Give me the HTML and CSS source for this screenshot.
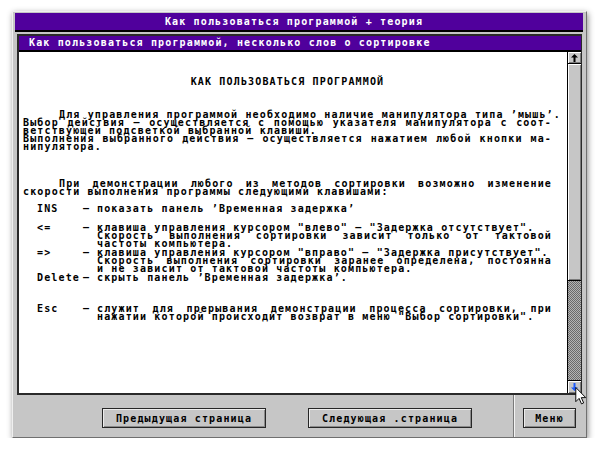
FILE: index.html
```html
<!DOCTYPE html>
<html lang="ru">
<head>
<meta charset="utf-8">
<title>Как пользоваться программой</title>
<link rel="stylesheet" href="styles.css">
</head>
<body>
<div class="screen">
  <div class="window">
    <div class="titlebar">Как пользоваться программой + теория</div>
    <div class="panel">
      <div class="subtitle">Как пользоваться программой, несколько слов о сортировке</div>
      <div class="body">
        <div class="text">
          <div class="ln heading">КАК ПОЛЬЗОВАТЬСЯ ПРОГРАММОЙ</div>
          <div class="para p1">
            <div class="ln j ind">Для управления программой необходимо наличие манипулятора типа ’мышь’.</div>
            <div class="ln j">Выбор действия – осуществляется с помощью указателя манипулятора с соот-</div>
            <div class="ln">ветствующей подсветкой выбранной клавиши.</div>
            <div class="ln j">Выполнения выбранного действия – осуществляется нажатием любой кнопки ма-</div>
            <div class="ln">нипулятора.</div>
          </div>
          <div class="para p2">
            <div class="ln j ind">При демонстрации любого из методов сортировки возможно изменение</div>
            <div class="ln">скорости выполнения программы следующими клавишами:</div>
          </div>
          <div class="keys">
            <div class="row r-ins">
              <div class="key">INS</div><div class="dash">–</div>
              <div class="desc"><div class="ln">показать панель ’Временная задержка’</div></div>
            </div>
            <div class="row r-left">
              <div class="key">&lt;=</div><div class="dash">–</div>
              <div class="desc">
                <div class="ln">клавиша управления курсором "влево" – "Задержка отсутствует".</div>
                <div class="ln j">Скорость выполнения сортировки зависит только от тактовой</div>
                <div class="ln">частоты компьютера.</div>
              </div>
            </div>
            <div class="row r-right">
              <div class="key">=&gt;</div><div class="dash">–</div>
              <div class="desc">
                <div class="ln">клавиша управления курсором "вправо" – "Задержка присутствует".</div>
                <div class="ln j">Скорость выполнения сортировки заранее определена, постоянна</div>
                <div class="ln">и не зависит от тактовой частоты компьютера.</div>
              </div>
            </div>
            <div class="row r-del">
              <div class="key">Delete</div><div class="dash">–</div>
              <div class="desc"><div class="ln">скрыть панель ’Временная задержка’.</div></div>
            </div>
            <div class="row r-esc">
              <div class="key">Esc</div><div class="dash">–</div>
              <div class="desc">
                <div class="ln j">служит для прерывания демонстрации процесса сортировки, при</div>
                <div class="ln">нажатии которой происходит возврат в меню "Выбор сортировки".</div>
              </div>
            </div>
          </div>
        </div>
        <div class="scroll">
          <div class="sbtn up">
            <svg width="7" height="8" viewBox="0 0 7 8"><path d="M3.5 0 L7 3.5 H4.5 V8 H2.5 V3.5 H0 Z" fill="#000"/></svg>
          </div>
          <div class="thumb"></div>
          <div class="track"></div>
          <div class="sbtn down">
            <svg width="7" height="8" viewBox="0 0 7 8"><path d="M3.5 8 L7 4.5 H4.5 V0 H2.5 V4.5 H0 Z" fill="#1d5cff"/></svg>
          </div>
        </div>
      </div>
    </div>
    <div class="bottom">
      <div class="bleft">
        <button class="btn wide">Предыдущая страница</button>
        <button class="btn wide">Следующая .страница</button>
      </div>
      <div class="bright">
        <button class="btn menu">Меню</button>
      </div>
    </div>
    <svg class="cursor" width="12" height="18" viewBox="0 0 12 19"><path d="M0.5 0.5 L0.5 15.5 L4 12 L6.5 17.8 L8.8 16.8 L6.3 11.2 L11 11.2 Z" fill="#fff" stroke="#000" stroke-width="1"/></svg>
  </div>
</div>
</body>
</html>
```

FILE: styles.css
```css
body {
  margin: 0;
  background: #fff;
  font-family: "DejaVu Sans Mono", "Liberation Mono", monospace;
  font-weight: bold;
  font-size: 10px;
  letter-spacing: 1.15px;
  color: #000;
}

.screen {
  padding: 11px 0 0 12px;
}

.window {
  position: relative;
  width: 575px;
  height: 427px;
  box-sizing: border-box;
  background: #c6c6c6;
  border: 1px solid;
  border-color: #efefef #707070 #707070 #efefef;
  padding: 1px 3px 0 2px;
  box-shadow: 1px 2px 6px rgba(0, 0, 0, 0.45);
  display: flex;
  flex-direction: column;
}

.titlebar {
  height: 17px;
  line-height: 17px;
  background: #50009c;
  border-bottom: 2px solid #000;
  color: #fff;
  text-align: center;
  padding-right: 10px;
  white-space: nowrap;
}

.panel {
  margin: 2px 1px 0 2px;
  border-style: solid;
  border-width: 2px 1px 2px 2px;
  border-color: #2a2a2a;
  background: #fff;
  display: flex;
  flex-direction: column;
}

.subtitle {
  height: 14px;
  line-height: 14px;
  background: #50009c;
  color: #fff;
  border-bottom: 2px solid #000;
  padding-left: 10px;
  white-space: nowrap;
}

.body {
  display: flex;
  height: 341px;
}

.text {
  flex: 1 1 0;
  min-width: 0;
  overflow: hidden;
  background: #fff;
  padding: 0 15px 0 4px;
}

.ln {
  height: 8px;
  line-height: 8px;
  white-space: nowrap;
}

.j {
  text-align: justify;
  text-align-last: justify;
}

.ind {
  padding-left: 36px;
}

.heading {
  margin-top: 26px;
  text-align: center;
}

.p1 { margin-top: 25px; }
.p2 { margin-top: 29px; }

.keys { margin-top: 9px; }

.row {
  display: flex;
  padding-left: 14px;
}

.key {
  width: 46px;
  height: 8px;
  line-height: 8px;
  flex: none;
}

.dash {
  width: 14px;
  height: 8px;
  line-height: 8px;
  flex: none;
}

.desc { flex: 1; min-width: 0; }

.r-left { margin-top: 11px; }
.r-right { margin-top: 1px; }
.r-del { margin-top: 1px; }
.r-esc { margin-top: 23px; }

.scroll {
  flex: none;
  width: 13px;
  border-left: 1px solid #000;
  background: #c6c6c6;
  display: flex;
  flex-direction: column;
}

.sbtn {
  height: 11px;
  flex: none;
  display: flex;
  align-items: center;
  justify-content: center;
  box-shadow: inset 1px 1px #fff, inset -1px -1px #7a7a7a;
}

.up { border-bottom: 1px solid #000; }

.thumb {
  height: 216px;
  flex: none;
  border-bottom: 1px solid #000;
  box-shadow: inset 1px 1px #fff, inset -1px -1px #7a7a7a;
}

.track {
  flex: 1;
  background: repeating-conic-gradient(#6a6a6a 0 25%, #b4b4b4 0 50%) 0 0 / 2px 2px;
}

.down {
  height: 12px;
  border-top: 1px solid #000;
}

.bottom {
  flex: 1;
  display: flex;
}

.bleft {
  width: 499px;
  box-sizing: border-box;
  border-right: 1px solid #7a7a7a;
  display: flex;
  align-items: flex-start;
  gap: 42px;
  padding: 13px 0 0 87px;
}

.bright {
  border-left: 1px solid #f4f4f4;
  padding: 13px 0 0 8px;
}

.btn {
  height: 20px;
  box-sizing: border-box;
  border: 1px solid #262626;
  background: #c6c6c6;
  box-shadow: inset 1px 1px #ececec, inset -1px -1px #8a8a8a;
  font: inherit;
  letter-spacing: inherit;
  color: #000;
  padding: 0;
  white-space: nowrap;
}

.wide { width: 164px; }
.menu { width: 53px; }

.cursor {
  position: absolute;
  left: 562px;
  top: 375px;
}
```
